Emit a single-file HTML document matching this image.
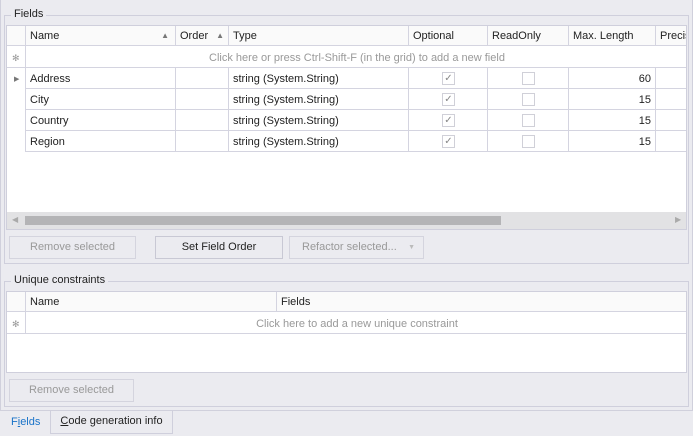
<!DOCTYPE html><html><head><style>
*{box-sizing:border-box;margin:0;padding:0}
body{width:693px;height:436px;background:#ebebf0;font-family:"Liberation Sans",sans-serif;font-size:11px;color:#222;position:relative;overflow:hidden}
.a{position:absolute}
.grp{position:absolute;border:1px solid #cfcfdc}
.lg{position:absolute;background:#ebebf0;padding:0 3px;color:#222}
.grid{position:absolute;background:#fff;border:1px solid #cfcfdc}
.c{position:absolute;border-right:1px solid #d4d4e0;border-bottom:1px solid #d4d4e0;padding:4px 4px 2px;white-space:nowrap;overflow:hidden;height:21px;line-height:14px}
.h{background:#fafafa;height:20px;padding-top:3px}
.btn{position:absolute;border:1px solid #d4d4de;text-align:center;line-height:21px;color:#999;background:#ebebf0}
.cb{position:absolute;width:13px;height:13px;border:1px solid #d0d0d8;background:#fff;font-size:10px;line-height:11px;text-align:center;color:#888}
.r{text-align:right}
</style></head><body>
<div class="a" style="left:0;top:0;width:693px;height:411px;border:1px solid #d0d0dc;border-top:none"></div>
<div class="grp" style="left:4px;top:15px;width:685px;height:249px"></div>
<div class="lg" style="left:11px;top:8px">Fields</div>
<div class="grid" style="left:6px;top:25px;width:681px;height:205px;overflow:hidden">
<div class="c h" style="left:0;top:0;width:19px"></div>
<div class="c h" style="left:19px;top:0;width:150px">Name<span style="position:absolute;right:6px;top:3px;font-size:8px;color:#777">▲</span></div>
<div class="c h" style="left:169px;top:0;width:53px">Order<span style="position:absolute;right:4px;top:3px;font-size:8px;color:#777">▲</span></div>
<div class="c h" style="left:222px;top:0;width:180px">Type</div>
<div class="c h" style="left:402px;top:0;width:79px">Optional</div>
<div class="c h" style="left:481px;top:0;width:81px">ReadOnly</div>
<div class="c h" style="left:562px;top:0;width:87px">Max. Length</div>
<div class="c h" style="left:649px;top:0;width:40px;border-right:none">Precision</div>
<div class="c" style="left:0;top:20px;width:19px;height:22px;color:#999;font-size:9px;padding:5px 5px">✻</div>
<div class="c" style="left:19px;top:20px;width:662px;height:22px;border-right:none;color:#999;text-align:center;padding-top:5px">Click here or press Ctrl-Shift-F (in the grid) to add a new field</div>
<div class="a" style="left:0;top:42px">
<div class="c" style="left:0;top:0;width:19px;height:84px;border-bottom:none"><span style="position:absolute;left:7px;top:5px;font-size:7px;color:#777">▶</span></div>
<div class="c" style="left:19px;top:0;width:150px">Address</div><div class="c" style="left:169px;top:0;width:53px"></div><div class="c" style="left:222px;top:0;width:180px">string (System.String)</div><div class="c" style="left:402px;top:0;width:79px"></div><div class="c" style="left:481px;top:0;width:81px"></div><div class="c r" style="left:562px;top:0;width:87px">60</div><div class="c" style="left:649px;top:0;width:40px;border-right:none"></div>
<div class="c" style="left:19px;top:21px;width:150px">City</div><div class="c" style="left:169px;top:21px;width:53px"></div><div class="c" style="left:222px;top:21px;width:180px">string (System.String)</div><div class="c" style="left:402px;top:21px;width:79px"></div><div class="c" style="left:481px;top:21px;width:81px"></div><div class="c r" style="left:562px;top:21px;width:87px">15</div><div class="c" style="left:649px;top:21px;width:40px;border-right:none"></div>
<div class="c" style="left:19px;top:42px;width:150px">Country</div><div class="c" style="left:169px;top:42px;width:53px"></div><div class="c" style="left:222px;top:42px;width:180px">string (System.String)</div><div class="c" style="left:402px;top:42px;width:79px"></div><div class="c" style="left:481px;top:42px;width:81px"></div><div class="c r" style="left:562px;top:42px;width:87px">15</div><div class="c" style="left:649px;top:42px;width:40px;border-right:none"></div>
<div class="c" style="left:19px;top:63px;width:150px">Region</div><div class="c" style="left:169px;top:63px;width:53px"></div><div class="c" style="left:222px;top:63px;width:180px">string (System.String)</div><div class="c" style="left:402px;top:63px;width:79px"></div><div class="c" style="left:481px;top:63px;width:81px"></div><div class="c r" style="left:562px;top:63px;width:87px">15</div><div class="c" style="left:649px;top:63px;width:40px;border-right:none"></div>
<div class="cb" style="left:435px;top:4px">✓</div><div class="cb" style="left:515px;top:4px"></div>
<div class="cb" style="left:435px;top:25px">✓</div><div class="cb" style="left:515px;top:25px"></div>
<div class="cb" style="left:435px;top:46px">✓</div><div class="cb" style="left:515px;top:46px"></div>
<div class="cb" style="left:435px;top:67px">✓</div><div class="cb" style="left:515px;top:67px"></div>
</div>
<div class="a" style="left:0;top:186px;width:681px;height:18px;background:#e2e2e4">
<span class="a" style="left:5px;top:3px;font-size:8px;color:#aaa">◀</span>
<div class="a" style="left:18px;top:4px;width:476px;height:9px;background:#b4b4b6"></div>
<span class="a" style="left:668px;top:3px;font-size:8px;color:#aaa">▶</span>
</div>
</div>
<div class="btn" style="left:9px;top:236px;width:127px;height:23px">Remove selected</div>
<div class="btn" style="left:155px;top:236px;width:128px;height:23px;color:#222;border-color:#c8c8d4">Set Field Order</div>
<div class="btn" style="left:289px;top:236px;width:135px;height:23px;text-align:left;padding-left:12px">Refactor selected...<span style="position:absolute;right:8px;font-size:7px;color:#bbb">▼</span></div>
<div class="grp" style="left:4px;top:281px;width:685px;height:126px"></div>
<div class="lg" style="left:11px;top:274px">Unique constraints</div>
<div class="grid" style="left:6px;top:291px;width:681px;height:82px;overflow:hidden">
<div class="c h" style="left:0;top:0;width:19px"></div>
<div class="c h" style="left:19px;top:0;width:251px">Name</div>
<div class="c h" style="left:270px;top:0;width:411px;border-right:none">Fields</div>
<div class="c" style="left:0;top:20px;width:19px;height:22px;color:#999;font-size:9px;padding:5px 5px">✻</div>
<div class="c" style="left:19px;top:20px;width:662px;height:22px;border-right:none;color:#999;text-align:center;padding-top:5px">Click here to add a new unique constraint</div>
</div>
<div class="btn" style="left:9px;top:379px;width:125px;height:23px">Remove selected</div>
<div class="a" style="left:11px;top:416px;color:#1a73c8">F<u>i</u>elds</div>
<div class="a" style="left:50px;top:410px;width:123px;height:24px;border:1px solid #cfcfdc;border-top:none;line-height:22px;text-align:center"><u>C</u>ode generation info</div>
</body></html>
